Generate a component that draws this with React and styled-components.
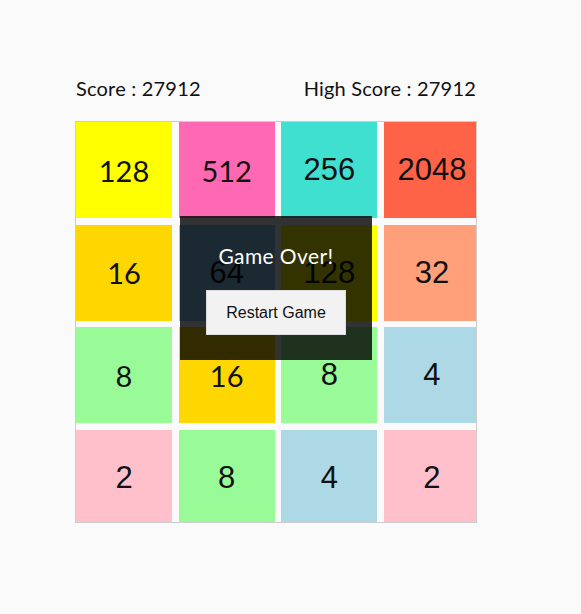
import styled, { createGlobalStyle } from 'styled-components';

const GlobalStyle = createGlobalStyle`
  html, body {
    margin: 0;
    padding: 0;
    background: #fafafa;
  }
  body {
    font-family: 'Lato', 'Liberation Sans', sans-serif;
    color: #111;
  }
`

const board = [
  [128, '#ffff00', true], [512, '#ff69b4', true], [256, '#40e0d0'], [2048, '#ff6347'],
  [16, '#ffd700', true], [64, '#87cefa'], [128, '#ffff00'], [32, '#ffa07a'],
  [8, '#98fb98', true], [16, '#ffd700', true], [8, '#98fb98'], [4, '#add8e6'],
  [2, '#ffc0cb'], [8, '#98fb98'], [4, '#add8e6'], [2, '#ffc0cb'],
]

const App = () => {
  return (
    <Page>
      <GlobalStyle />
      <Game>
        <ScoreRow>
          <span>Score : 27912</span>
          <span>High Score : 27912</span>
        </ScoreRow>
        <Board>
          <Grid>
            {board.map(([value, color, round], i) => (
              <Tile key={i} $bg={color} $round={round}>{value}</Tile>
            ))}
          </Grid>
          <Overlay>
            <OverTitle>Game Over!</OverTitle>
            <RestartButton>Restart Game</RestartButton>
          </Overlay>
        </Board>
      </Game>
    </Page>
  )
}

export default App

const Page = styled.div`
  width: 581px;
  height: 614px;
  padding: 76px 0 0 75px;
  box-sizing: border-box;
`

const Game = styled.div`
  width: 402px;
  display: flex;
  flex-direction: column;
  gap: 21px;
`

const ScoreRow = styled.div`
  display: flex;
  justify-content: space-between;
  padding: 0 1px;
  font-size: 20px;
  letter-spacing: 0.2px;
  line-height: 24px;
  color: #111;
`

const Board = styled.div`
  position: relative;
  width: 400px;
  height: 400px;
  border: 1px solid #cccccc;
  overflow: hidden;
`

const Grid = styled.div`
  display: grid;
  grid-template-columns: repeat(4, 96px);
  grid-auto-rows: 96px;
  gap: 6.67px;
`

const Tile = styled.div`
  background: ${p => p.$bg};
  display: flex;
  align-items: center;
  justify-content: center;
  font-family: ${p => p.$round ? "'Lato', sans-serif" : "'Liberation Sans', Arial, sans-serif"};
  font-size: ${p => p.$round ? '29px' : '31px'};
  color: #111;
`

const Overlay = styled.div`
  position: absolute;
  left: 104px;
  top: 94px;
  width: 192px;
  height: 144px;
  box-sizing: border-box;
  padding: 25px 26px;
  background: rgba(0, 0, 0, 0.8);
  display: flex;
  flex-direction: column;
  align-items: center;
`

const OverTitle = styled.h2`
  margin: 0 0 19px;
  font-size: 21px;
  letter-spacing: 0.4px;
  line-height: 30px;
  font-weight: 400;
  color: #ffffff;
`

const RestartButton = styled.button`
  width: 140px;
  height: 45px;
  background: #f2f2f2;
  border: 1px solid #dddddd;
  font-family: 'Liberation Sans', Arial, sans-serif;
  font-size: 16px;
  color: #111;
  cursor: pointer;
`
